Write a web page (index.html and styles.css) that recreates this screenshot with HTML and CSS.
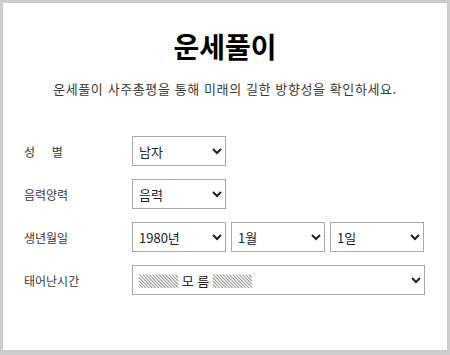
FILE: index.html
```html
<!DOCTYPE html>
<html lang="ko">
<head>
<meta charset="utf-8">
<link rel="stylesheet" href="styles.css">
</head>
<body>
<div class="box">
  <h1 class="title">운세풀이</h1>
  <p class="desc">운세풀이 사주총평을 통해 미래의 길한 방향성을 확인하세요.</p>
  <div class="form">
    <div class="label">성&nbsp;&nbsp;&nbsp;&nbsp;&nbsp;별</div>
    <div class="fields"><select class="sel sel-s"><option>남자</option><option>여자</option></select></div>
    <div class="label">음력양력</div>
    <div class="fields"><select class="sel sel-s"><option>음력</option><option>양력</option></select></div>
    <div class="label">생년월일</div>
    <div class="fields">
      <select class="sel sel-s"><option>1980년</option></select>
      <select class="sel sel-s"><option>1월</option></select>
      <select class="sel sel-s"><option>1일</option></select>
    </div>
    <div class="label">태어난시간</div>
    <div class="fields"><select class="sel sel-w"><option>▒▒▒ 모 름 ▒▒▒</option></select></div>
  </div>
</div>
</body>
</html>
```
FILE: styles.css
```css
html, body { margin: 0; padding: 0; background: #fff; }
body { font-family: "Noto Sans CJK KR", "Noto Sans", sans-serif; }
.box {
  box-sizing: border-box;
  width: 450px;
  height: 355px;
  border: 3px solid #cccccc;
  border-bottom-width: 5px;
  padding: 23px 21px 0 21px;
}
.title {
  margin: 0;
  text-align: center;
  font-size: 28px;
  line-height: 40px;
  font-weight: 700;
  color: #000;
}
.desc {
  margin: 14px 0 0;
  text-align: center;
  font-size: 13px;
  line-height: 18px;
  color: #3a3a3a;
  letter-spacing: 0.6px;
}
.form {
  margin-top: 38px;
  display: grid;
  grid-template-columns: 108px 1fr;
  row-gap: 13px;
  align-items: center;
}
.label {
  font-size: 12px;
  color: #3a3a3a;
}
.fields { display: flex; gap: 5px; }
.sel {
  box-sizing: border-box;
  height: 30px;
  border: 1px solid #a9a9a9;
  border-radius: 0;
  background: #fff;
  font-family: "Noto Sans CJK KR", sans-serif;
  font-size: 13px;
  color: #222;
  padding: 0 2px;
  margin: 0;
}
.sel-s { width: 94px; }
.sel-w { width: 293px; }
```
